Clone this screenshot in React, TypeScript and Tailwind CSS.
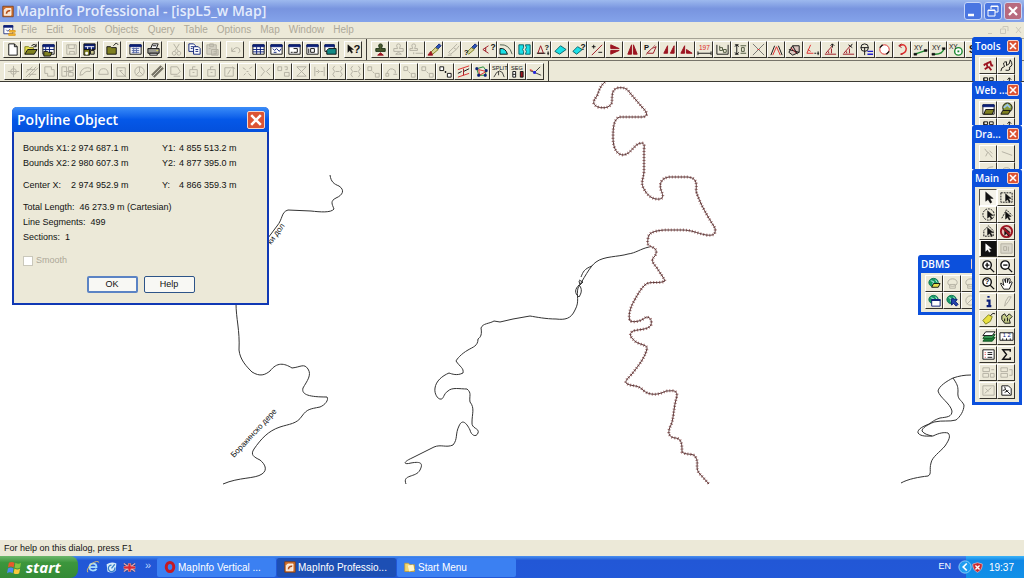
import React from "react";

type Path = [d: string, stroke: string, fill?: string, width?: number];
type Label = { t: string; x: number; y: number; c: string; s: number };
type Art = (Path | Label)[];

const K = "#111111";
const G = "#b3b0a2";
const R = "#9c1420";
const RED = "#dd2a2a";
const CY = "#19e0e6";
const N = "#0c2078";
const Y = "#e6df4c";
const OL = "#7f8020";
const GR = "#1c8a30";
const W = "#ffffff";

const txt = (t: string, x: number, y: number, c = K, s = 7): Label => ({ t, x, y, c, s });

const windowFrame: Art = [
  ["M2 3H14V13H2Z", K, W],
  ["M2 3H14V5H2Z", N, N],
];

const magnifier: Path = ["M11 6.5A4.5 4.5 0 1 1 2 6.5A4.5 4.5 0 1 1 11 6.5M10 10L14 14", K, W, 1.5];
const globe: Art = [
  ["M12 7A5 4.5 0 1 1 2 7A5 4.5 0 1 1 12 7", "#0e7455", "#169a64"],
  ["M4 5L7 6L6 9M9 4L11 7", "#bfeee8", "none"],
];
const brush: Art = [
  ["M13 2L9 6L11 8L15 4Z", N, "#2f58b8"],
  ["M9 6L4 11L6 13L12 8Z", OL, "#d9d39a"],
];
const cursor = (x: number, y: number, c = K): Path => [
  `M${x} ${y}V${y + 8}L${x + 2} ${y + 6}L${x + 4} ${y + 9}L${x + 5} ${y + 8}L${x + 3} ${y + 5}H${x + 6}Z`,
  c,
  c,
  0.5,
];

const icons: Record<string, Art> = {
  app: [["M1 1H15V15H1Z", "#7a3a12", "#d3722e"], ["M5 4H12V13H3V6Z", W, "#f6e2cf"], ["M6 11A4 4 0 0 1 11 7", "#b04a18", "none", 2]],
  doc: [["M1 2H12V12H1Z", N, W], ["M1 2H12V4H1Z", N, N], ["M4 7L6 9L9 6", N, "none"], ["M8 8H15V10H8ZM7 12H15V14H7Z", "#e09818", "#f4bc38"]],
  page: [["M4 2H10L13 5V14H4Z", K, W], ["M10 2V5H13", K, "none"]],
  open: [["M2 13V5H6L7 6H11V8", OL, Y], ["M2 13L5 8H15L12 13Z", K, OL], ["M9 4Q12 1 14 4M14 2V5H11", K, "none"]],
  openTable: [...windowFrame, ["M5 5V12M9 5V12M2 8H14", N, "none"], ["M3 14V10H7L8 11H12L10 15H3Z", K, OL]],
  save: [["M3 3H13V13H3ZM5 3V7H11V3M6 13V10H11V13", G, "none"]],
  saveTable: [["M2 2H14V8H2Z", K, N], ["M3 5H13M6 5V8M10 5V8", W, "none"], ["M2 8H8V14H2Z", K, OL], ["M4 11H6V13H4Z", W, W], ["M9 9H13V13H9Z", K, "#c9c48c"]],
  close: [["M2 13V5H6L7 6H12V13Z", K, OL], ["M9 4L12 1L14 3", K, "none"]],
  window: [...windowFrame, ["M4 7H12M4 9H12M4 11H12M6 6V12M9 6V12", "#566aa8", "none"]],
  print: [["M5 7L7 2H13L11 7", K, W], ["M2 7H14V12H2Z", K, "#9a9a92"], ["M4 12H12V14H4Z", K, W], ["M7 4H11", K, "none"], ["M11 9H13", Y, "none"]],
  cut: [["M5 2L10 10M11 2L6 10M5 14A2 2 0 1 1 6 10A2 2 0 1 1 5 14M11 14A2 2 0 1 1 10 10A2 2 0 1 1 11 14", G, "none"]],
  copy: [["M2 2H7L9 4V10H2Z", N, W], ["M7 5H12L14 7V13H7Z", N, W], ["M4 5H7M4 7H6M9 8H12M9 10H12", N, "none"]],
  paste: [["M2 3H12V13H2ZM5 2H9V5H5ZM7 8H14V14H7ZM9 10H12M9 12H12M4 7H6", G, "#d4d1c3"]],
  undo: [["M4 6V10H8M4 10Q8 4 12 7Q14 10 11 12", G, "none"]],
  browser: [...windowFrame, ["M2 8H14M2 10.500H14M6 5V13M10 5V13", N, "none"]],
  mapper: [...windowFrame, ["M4 7L6 9L8 7L11 10L13 7M5 11H8", N, "none"]],
  grapher: [...windowFrame, ["M7 7H11V11H7M4 11H6", K, "none"]],
  layout: [...windowFrame, ["M6 7H10V11H6Z", K, "none"], ["M4 7V12", K, "none"]],
  redistrict: [["M2 3H12V10H2Z", K, W], ["M2 3H12V5H2Z", N, N], ["M6 7H14V13H4V9Z", K, "#128a86"]],
  helpArrow: [cursor(2, 3), txt("?", 8, 12, K, 12)],
  stamp: [["M6 4A2 2 0 1 1 10 4L9 7H13V10H3V7H7Z", "#1f3318", "#4a5a30"], ["M5 14L8 11.500L11 14Z", R, R]],
  stampGrey: [["M6 4A2 2 0 0 1 10 4L9 7H13V10H3V7H7ZM5 13L8 11L11 13Z", G, "none"]],
  stampGrey2: [["M3 4A2 2 0 0 1 7 4L6 7H9V9H1V7H4ZM7 12H15M5 11V13", G, "none"]],
  brushRed: [...brush, ["M1 14L4 10L6 14Z", R, R]],
  brushGrey: [["M13 2L9 6L4 11L6 13L12 8L15 4M3 14H7M9 6L12 8", G, "none"]],
  brushAsk: [...brush, txt("?", 1, 14, K, 8)],
  lessAsk: [["M8 4L2 8L8 12M5 6V10", R, "none"], txt("?", 10, 8, K, 9)],
  arcCyan: [["M1 13V7Q7 6 9 13Z", K, CY], ["M1 3Q11 2 14 13", "#4c5c4c", "none"]],
  splitCyan: [["M2 3H7V6L6 8L7 10V13H2ZM9 3H14V13H9L10 10L9 8L10 6Z", "#0b6268", CY]],
  triAsk: [["M3 12L6 4L9 12Z", R, "none"], ["M2 12H11M13 12H15M14 10V14", K, "none"], txt("?", 10, 8, K, 8)],
  diamond: [["M2 10L8 4L14 8L7 13Z", "#0b6268", CY]],
  diamondAsk: [["M2 10L7 5L12 8L6 13Z", "#0b6268", CY], txt("?", 10, 8, K, 9)],
  plusLine: [["M3 14L14 3", R, "none"], ["M3 5H7M5 3V7M10 11H14", K, "none"]],
  flipV: [["M4 3L13 7H4ZM4 13L13 9H4Z", R, R]],
  flipH: [["M7 3V13H3ZM9 3V13H13Z", R, R]],
  pDiamond: [["M4 12L9 7L14 5L11 12Z", R, "none"], ["M3 14L13 3", "#b67676", "none"], txt("P", 1, 8, K, 8)],
  tri2: [["M3 12L7 4V12ZM10 12L14 4V12Z", R, R]],
  tri3: [["M2 12L6 4V12ZM8 12V8L14 12Z", R, R]],
  n197: [txt("197", 2, 9, RED, 7), ["M1 12H15M1 10V14M15 10V14", K, "none"]],
  bars: [["M2 3V13M14 3V13M2 13H14", K, "none"], ["M5 4V9H8V6H5M9 8H12V11H9Z", "#4c553c", "none"]],
  dims: [["M4 3V13M2 3H6M2 13H6M2 5L4 3L6 5M2 11L4 13L6 11", K, "none"], ["M8 4H14M8 12H14M9 6H12V10H9Z", "#4c553c", "none"]],
  cross: [["M2 2L14 14M14 2L2 14", "#555555", "none", 0.8], ["M7 8H9", RED, "none"]],
  lambda: [["M2 14L6 4M14 14L10 4", K, "none"], ["M4 14L8 5L12 14", RED, "none"]],
  poly: [["M2 11L6 4H13V11L6 14ZM2 8L13 11M6 4L11 13", K, "#d9c5bd"], ["M4 6L10 12", R, "none"]],
  angle1: [["M6 3L2 12H9M3 8L6 10", RED, "none"], ["M10 12H12M13 12H15M14 10V14", K, "none"]],
  angle2: [["M2 13H14M3 12L10 4M9 12V7M6 10V12", R, "none"], ["M10 6V2M8 4L10 2L12 4", K, "none"]],
  angle3: [["M2 13H14M3 12L10 4M9 12V7M6 10V12", R, "none"], ["M8 3L12 6M12 2L10 5", K, "none"]],
  circleEq: [["M10 6A4 4 0 1 1 2 6A4 4 0 1 1 10 6M2 6H10M6 6V14", K, "none"], ["M9 10H15M9 13H15", "#2020cc", "none", 1.5]],
  circle: [["M13 8A5 5 0 1 1 3 8A5 5 0 1 1 13 8", RED, W], ["M6 3L3 6M10 13L13 10", K, "none", 1.5]],
  arcArrow: [["M5 4Q11 1 12 7Q12 12 6 13", RED, "none", 1.5], ["M7 2L4 4L7 6M6 13H8", R, "none"]],
  xyLine: [["M2 13L14 9", GR, "none", 1.5], ["M1 12H4V14H1ZM12 8H15V10H12Z", K, K, 0.5], txt("XY", 1, 8, K, 7)],
  xyCurve: [["M2 13Q12 14 14 7", GR, "none", 1.5], ["M1 12H4V14H1ZM12 6H15V8H12Z", K, K, 0.5], txt("XY", 1, 8, K, 7)],
  xyCircle: [["M14 10A4 4 0 1 1 6 10A4 4 0 1 1 14 10", GR, W, 1.5], ["M9 10H11", GR, "none", 2], txt("XY", 0, 7, K, 7)],
  letterS: [txt("S", 2, 12, K, 11)],
  target: [["M8 2V14M2 8H14M11 8A3 3 0 1 1 5 8A3 3 0 1 1 11 8", G, "none"]],
  hatch: [["M2 14L13 3M5 14L15 4M2 9L9 3M3 6H12M5 11H13", G, "none"]],
  combine: [["M3 3H10V6H13V13H6V10H3Z", G, "none"]],
  boxes: [["M2 3H7V13H2ZM9 3H14V7H9ZM9 9H14V13H9ZM4 8H12", G, "none"]],
  blob: [["M2 12Q3 4 10 4Q16 4 13 8Q9 7 7 9Q6 12 2 12", G, "none"]],
  dome: [["M3 11Q3 5 8 5Q13 5 13 11Z", G, "none"]],
  selBox: [["M3 4H12V13H3ZM6 7L13 14M6 7H9", G, "none"]],
  pie: [["M13 8A5 5 0 1 1 3 8A5 5 0 1 1 13 8M8 8V3M8 8L4 12M8 8L12 12", G, "none"]],
  thick: [["M3 13L13 3", "#777466", "none", 5], ["M3 13L13 3", "#d6d3c6", "none", 1]],
  tag: [["M3 3H10L13 8L10 11H3ZM6 13H13", G, "none"]],
  boxUp: [["M4 6H12V13H4ZM7 6V3H10M7 9H9", G, "none"]],
  boxNote: [["M3 4H12V13H3ZM6 11L9 6M11 3L14 5", G, "none"]],
  scatter: [["M3 4L6 6M10 5L13 3M4 12L6 10M9 10L12 13M7 8H9", G, "none"]],
  arms: [["M3 3L7 8L3 13M13 4L9 8L13 12", G, "none"]],
  quest: [["M2 3H6V7H2ZM9 9H14V13H9ZM9 3H12V6H10", G, "none"]],
  hour: [["M3 3H13L3 13H13L3 3", G, "none"]],
  squeeze: [["M3 3V13M13 3V13M4 8H7M9 8H12M6 6L8 8L6 10", G, "none"]],
  zig: [["M5 2L3 5L5 8L3 11L5 14M11 2L13 5L11 8L13 11L11 14M6 8H10", G, "none"]],
  nodes: [["M2 3H6V7H2ZM10 10H14V14H10ZM7 8L9 10", G, "none"]],
  nodeCurve: [["M3 10Q6 2 12 7M2 10H5V13H2ZM10 11H14M12 7V10", G, "none"]],
  nodesK: [["M2 3H6V7H2ZM10 10H14V14H10Z", K, W], ["M7.500 8H8.500V9H7.500Z", K, K]],
  redLines: [["M2 6L14 2M2 14L14 10", RED, "none"], ["M2 10L6 8M8 8L14 5", K, "none"], ["M8 5V12", R, "none"]],
  polyNodes: [["M3 5L10 3L13 7L12 12H5Z", GR, "none"], ["M5 6L13 8L6 12Z", RED, "none"], ["M2 4H4V6H2ZM12 6H14V8H12ZM4 11H6V13H4ZM11 11H13V13H11Z", N, N]],
  split: [txt("SPLIT", 0, 6, K, 6), ["M2 14L5 9M5 9Q8 6 11 9L13 14M7 8V12", K, "none", 0.8]],
  seg: [txt("SEG", 1, 6, K, 6), ["M3 8H6V14H3ZM3 11H6", K, W], ["M11 8H14V14H11Z", K, R]],
  joint: [["M2 7L7 9L13 3M7 9L14 12", K, "none", 0.8], ["M6 8H8V10H6Z", "#2424dd", "#2424dd"], ["M2 6L5 7", RED, "none"]],
  run: [["M4 12L7 10L6 6L10 4L11 8H13M8 9L11 13M5 6L3 8", R, "none", 2]],
  wrench: [["M2 14Q2 10 6 9Q3 4 8 4L8 8Q12 7 12 2Q16 8 11 10Q13 14 7 13", K, "none"]],
  webMap: [...windowFrame, ["M3 13L5 8H14L12 13Z", K, OL]],
  webGlobe: [["M14 6A5 5 0 1 1 4 6A5 5 0 1 1 14 6", K, "#8a9b38"], ["M5 6L9 3L12 6", "#9cc6e8", "none", 2], ["M2 13L4 9H12L10 13Z", K, OL]],
  symGrey: [["M4 3L7 7L5 11M7 6L12 12M9 5L12 8", G, "none"]],
  lineGrey: [["M3 6L14 10", G, "none"]],
  arcGrey: [["M3 12Q5 4 13 4", G, "none"]],
  flags: [["M3 3H7V6H3ZM9 3H13V6H9ZM3 3V12", K, "none"]],
  pinK: [["M5 6V12M11 3V10M9 5L11 3L13 5", K, "none"]],
  select: [["M5 2V12L7.500 10L10 14L11.500 13L9.500 9H13Z", K, K, 0.5]],
  marquee: [["M2 3H14V13H2Z", K, "none"], cursor(7, 4)],
  radius: [["M14 8A6 6 0 1 1 2 8A6 6 0 1 1 14 8", K, "none"], cursor(7, 4)],
  polySel: [["M3 12L8 3L14 9", K, "none"], cursor(7, 5)],
  boundary: [["M3 13V7L8 2L13 7V13Z", K, "none"], cursor(7, 4)],
  unselect: [["M14 8A6 6 0 1 1 2 8A6 6 0 1 1 14 8", R, "#e4bcb4", 2], cursor(6, 4), ["M4 4L12 12", R, "none", 2]],
  invert: [["M0 0H16V16H0Z", K, K], cursor(5, 3, W)],
  graphSel: [["M2 3H14V13H2ZM5 6H8V10H5ZM10 6V11", G, "#dad7ca"]],
  zoomIn: [magnifier, ["M4.500 6.500H9M6.500 4V9", K, "none", 1.5]],
  zoomOut: [magnifier, ["M4.500 6.500H9", K, "none", 1.5]],
  zoomAsk: [magnifier, txt("?", 4, 9, K, 8)],
  hand: [["M5 14L2 9Q1 7 3 8L5 10L4 4Q5 2 6 4L7 7V3Q8 1 9 3V7L10 3Q12 2 12 4L11 8Q14 5 14 7L11 14Z", K, W]],
  info: [["M8 2V4M6 7H9V13M6 13H11", N, "none", 2.4]],
  bolt: [["M10 3H13L10 8L6 13L7 8Z", G, "none"]],
  label: [["M2 10L8 4L12 6L10 11L5 14Z", OL, "#e9e040"], ["M10 5Q13 1 15 3", K, "none"]],
  drag: [["M3 5L6 3L8 6L11 3L14 6L11 9L12 13H6L3 9Z", K, "#c9cf8b"], ["M6 8V11M9 7V11", K, "none"]],
  layers: [["M2 13L5 9H15L12 13Z", "#0f5220", "#1c7a34"], ["M2 10L5 6H15L12 10Z", "#0f5220", "#3ca05a"], ["M2 7L5 3H15L12 7Z", K, W]],
  ruler: [["M1 4H15V12H1Z", K, W], ["M4 10V12M8 10V12M12 10V12", K, "none"], txt("1 2", 4, 9, N, 6)],
  legend: [["M2 3H14V13H2Z", K, W], ["M4 6H5M4 8H5M4 11H5", RED, "none"], ["M7 6H12M7 8H12M7 11H12", K, "none"]],
  sigma: [["M12 5V3H4L8 8L4 13H12V11", K, "none", 1.5]],
  gear1: [["M2 3H9V7H2ZM2 9H8V13H2ZM10 9H14V13H10ZM11 5H14", G, "none"]],
  gear2: [["M2 3H9V7H2ZM2 9H9V13H2ZM11 5H14V11H11", G, "none"]],
  clip1: [["M2 3H14V13H2ZM4 11L11 5M5 6L8 9", G, "none"]],
  clip2: [["M3 3H10L13 6V13H3Z", K, W], ["M6 4L7 7L12 12M4 8L7 7M6 10L10 8", K, "none"]],
  dbOpen: [...globe, ["M5 12L7 8H14L12 12Z", K, Y]],
  dbGrey: [["M13 7A5 4 0 1 1 3 7A5 4 0 1 1 13 7M5 9H11V13H5Z", G, "none"]],
  dbWin: [...globe, ["M5 7H14V14H5Z", N, W], ["M5 7H14V8H5Z", N, N]],
  dbArrow: [...globe, ["M7 6V13L9 11L12 14L14 12L11 9L13 7Z", N, "#2644ae"]],
  ban: [["M13 8A5 5 0 1 1 3 8A5 5 0 1 1 13 8M4 12L12 4", G, "none"]],
};

const DASHED = new Set(["marquee", "radius", "polySel", "boundary"]);

function Icon({ name, className = "h-4 w-4" }: { name: string; className?: string }) {
  return (
    <svg viewBox="0 0 16 16" className={className} aria-hidden="true">
      {icons[name].map((p, i) =>
        Array.isArray(p) ? (
          <path
            key={i}
            d={p[0]}
            stroke={p[1]}
            fill={p[2] ?? "none"}
            strokeWidth={p[3] ?? 1}
            strokeDasharray={DASHED.has(name) && i === 0 ? "2 1" : undefined}
          />
        ) : (
          <text key={i} x={p.x} y={p.y} fill={p.c} fontSize={p.s} fontWeight={p.s > 7 ? "bold" : "normal"} fontFamily="Liberation Sans, sans-serif">
            {p.t}
          </text>
        )
      )}
    </svg>
  );
}

function ToolButton({ name, pressed = false }: { name: string; pressed?: boolean }) {
  return (
    <button
      type="button"
      aria-label={name}
      aria-pressed={pressed}
      className={
        "flex h-[17px] w-[18px] shrink-0 items-center justify-center overflow-hidden border " +
        (pressed
          ? "border-t-[#55534a] border-l-[#55534a] border-r-white border-b-white bg-[#f5f3ea]"
          : "border-t-white border-l-white border-r-[#35332c] border-b-[#35332c] bg-[#ece9d8]")
      }
    >
      <Icon name={name} className="h-[15px] w-[15px] shrink-0" />
    </button>
  );
}

function ToolGroup({ names }: { names: string[] }) {
  return (
    <div className="flex">
      {names.map((n, i) => (
        <ToolButton key={i} name={n} />
      ))}
    </div>
  );
}

const standardGroups = [
  ["page", "open", "openTable"],
  ["save", "saveTable"],
  ["close"],
  ["window", "print"],
  ["cut", "copy", "paste"],
  ["undo"],
  ["browser", "mapper", "grapher", "layout", "redistrict"],
  ["helpArrow"],
];

const cogoTools = [
  "stamp", "stampGrey", "stampGrey2", "brushRed", "brushGrey", "brushAsk", "lessAsk", "arcCyan", "splitCyan",
  "triAsk", "diamond", "diamondAsk", "plusLine", "flipV", "flipH", "pDiamond", "tri2", "tri3", "n197", "bars",
  "dims", "cross", "lambda", "poly", "angle1", "angle2", "angle3", "circleEq", "circle", "arcArrow", "xyLine",
  "xyCurve", "xyCircle", "letterS",
];

const objectTools = [
  "target", "hatch", "combine", "boxes", "blob", "dome", "selBox", "pie", "thick", "tag", "boxUp", "boxUp",
  "boxNote", "scatter", "arms", "quest", "hour", "squeeze", "zig", "zig", "nodes", "nodeCurve", "nodes", "nodes",
  "nodesK", "redLines", "polyNodes", "split", "seg", "joint",
];

const menus = ["File", "Edit", "Tools", "Objects", "Query", "Table", "Options", "Map", "Window", "Help"];

function CloseX({ className }: { className: string }) {
  return (
    <button
      type="button"
      aria-label="Close"
      className={"flex shrink-0 items-center justify-center rounded-[2px] border border-[#f3d5cc] bg-[#dc5434] " + className}
    >
      <svg viewBox="0 0 10 10" className="h-full w-full">
        <path d="M2 2L8 8M8 2L2 8" stroke="#fff" strokeWidth="1.600" />
      </svg>
    </button>
  );
}

function Palette({ title, groups, columns = "grid-cols-2", className }: { title: string; groups: string[][]; columns?: string; className: string }) {
  return (
    <section className={"flex flex-col overflow-hidden rounded-t-[3px] border-x-[3px] border-[#0c50dc] bg-[#0c50dc] " + className}>
      <header className="flex h-[18px] shrink-0 items-center justify-between">
        <h2 className="whitespace-nowrap font-['Open_Sans',sans-serif] text-[10px] leading-[18px] font-semibold text-white">{title}</h2>
        <CloseX className="h-3 w-3" />
      </header>
      <div className="flex flex-col items-start gap-px bg-[#ece9d8] px-1 pt-[2px] pb-[3px]">
        {groups.map((g, i) => (
          <div key={i} className={"grid " + columns}>
            {g.map((n, j) => (
              <ToolButton key={j} name={n} pressed={n === "select"} />
            ))}
          </div>
        ))}
      </div>
    </section>
  );
}

const mainGroups = [
  ["select", "marquee", "radius", "polySel", "boundary", "unselect", "invert", "graphSel"],
  ["zoomIn", "zoomOut", "zoomAsk", "hand"],
  ["info", "bolt", "label", "drag"],
  ["layers", "ruler"],
  ["legend", "sigma"],
  ["gear1", "gear2"],
  ["clip1", "clip2"],
];

const selectedRiver =
  "M605 82C600 86 599 91 597 96C592 102 593 105 598 107C605 109 611 107 612 102C612 95 612 90 617 88C623 87 627 88 630 93L642 107C648 113 648 116 643 117H620C614 118 613 127 613 137C613 149 617 155 624 155C631 153 633 147 638 144C643 142 645 143 644 149V172C643 180 641 182 643 187C647 196 653 200 660 199C664 198 663 195 661 190C659 184 661 178 669 177H688C696 178 697 182 696 191C700 204 708 217 715 228C716 234 714 236 706 235C696 233 692 230 682 230H664C653 231 648 233 648 239C647 244 648 246 652 247C657 249 657 252 655 256C650 260 653 263 657 268C660 273 664 278 665 281C659 284 651 281 646 284C641 288 638 294 634 301C630 308 628 316 630 321C636 323 643 320 646 317C651 317 652 321 651 325C648 330 640 329 633 331C628 334 631 338 636 342C641 345 648 345 647 349C644 360 637 367 632 374C628 378 625 381 626 383C631 387 637 384 643 390C649 396 659 395 666 391C672 391 677 389 677 396C673 408 674 421 670 427C667 434 670 438 676 438C682 439 682 445 682 452C687 456 694 452 696 458C699 463 695 467 699 473L709 484";

const rivers = [
  "M330 175C331 182 334 184 339 186C345 190 343 195 336 198C330 201 332 204 334 209C331 213 320 212 311 211L288 210C281 212 283 219 277 226L268 238",
  "M236 303C236 319 240 330 239 350C240 360 247 367 252 372C260 377 265 375 270 371C277 362 284 363 292 368C301 367 304 363 308 369C312 375 307 381 303 388C301 395 310 397 327 397C329 400 325 405 320 407C310 409 307 409 302 416C297 424 289 424 280 427C268 431 261 439 254 449C250 455 254 457 260 460C265 464 268 470 262 474C255 479 239 477 223 484",
  "M649 247C640 249 636 253 628 254C618 257 604 256 596 262C590 266 583 280 578 288C576 296 580 301 575 310C571 319 565 320 556 319C546 319 536 317 530 316L513 319L500 322L494 321C489 324 483 323 481 328C482 334 481 337 478 339C478 346 473 347 468 350C461 354 457 359 456 361C460 367 464 368 463 373C457 376 452 374 449 373C442 376 436 381 435 388C434 394 438 399 440 399C444 400 443 394 448 391C452 387 460 389 467 389C472 393 469 396 470 402C475 408 472 414 472 422C471 429 480 428 478 433C476 438 471 435 470 430C466 422 462 419 459 426C455 434 458 439 453 445C446 448 441 444 434 447L412 458C403 462 403 465 411 463C422 461 423 464 420 470C416 478 402 474 406 484",
  "M592 266C584 269 583 272 581 277M579 280L583 282L580 285L579 281M579 285C575 289 574 293 579 297C583 291 581 287 579 285",
  "M971 375C964 375 959 376 953 378C947 381 939 386 938 391C940 398 950 403 952 411C952 417 947 417 940 418C934 420 932 422 929 424C924 426 917 429 918 433C921 437 928 436 933 436C939 433 944 432 948 433C951 436 949 440 945 446C940 452 932 457 931 463C929 470 932 474 928 476C919 477 908 479 901 483",
  "M953 378C957 384 958 386 958 391C957 400 961 399 964 405C964 411 960 417 956 420C949 422 943 420 934 422C927 425 922 428 922 431C924 434 928 435 932 436",
];

function MapView() {
  return (
    <svg viewBox="0 82 1024 458" preserveAspectRatio="xMinYMin slice" className="absolute inset-0 h-full w-full" role="img" aria-label="River map">
      {rivers.map((d, i) => (
        <path key={i} d={d} fill="none" stroke="#333" strokeWidth="1" />
      ))}
      <path d={selectedRiver} fill="none" stroke="#a87878" strokeWidth="3" strokeDasharray="1 2" />
      <path d={selectedRiver} fill="none" stroke="#5c3a3a" strokeWidth="1" />
      <g fontFamily="Liberation Sans, sans-serif" fontSize="8" fill="#111">
        <text transform="translate(234 458) rotate(-47)">Боракинско дере</text>
        <text transform="translate(271 245) rotate(-54)">ки дол</text>
      </g>
    </svg>
  );
}

function Bounds({ label, value }: { label: string; value: string }) {
  return (
    <>
      <dt>{label}</dt>
      <dd>{value}</dd>
    </>
  );
}

function PolylineDialog() {
  return (
    <section role="dialog" aria-label="Polyline Object" className="absolute top-[25px] left-3 w-[257px] rounded-t-[5px] border-2 border-t-0 border-[#1038b4] bg-[#ece9d8]">
      <header className="-mx-[2px] flex h-[25px] items-center justify-between rounded-t-[5px] bg-linear-to-b from-[#3a8cf8] via-[#0558e8] to-[#0450dc] pr-1 pl-[5px]">
        <h1 className="font-['Open_Sans',sans-serif] text-[14px] font-semibold text-white">Polyline Object</h1>
        <CloseX className="h-[18px] w-[18px]" />
      </header>
      <div className="flex flex-col px-[9px] pt-[9px] pb-[10px] font-['Liberation_Sans',sans-serif] text-[9px] leading-[15px] whitespace-nowrap text-[#111]">
        <dl className="grid grid-cols-[48px_91px_17px_1fr]">
          <Bounds label="Bounds X1:" value="2 974 687.1 m" />
          <Bounds label="Y1:" value="4 855 513.2 m" />
          <Bounds label="Bounds X2:" value="2 980 607.3 m" />
          <Bounds label="Y2:" value="4 877 395.0 m" />
        </dl>
        <dl className="mt-[7px] grid grid-cols-[48px_91px_17px_1fr]">
          <Bounds label="Center X:" value="2 974 952.9 m" />
          <Bounds label="Y:" value="4 866 359.3 m" />
        </dl>
        <p className="mt-[7px]">Total Length:&nbsp; 46 273.9 m (Cartesian)</p>
        <p>Line Segments:&nbsp; 499</p>
        <p>Sections:&nbsp; 1</p>
        <label className="mt-2 flex items-center gap-[3px] text-[#aca899]">
          <input type="checkbox" disabled className="h-[10px] w-[10px] appearance-none border border-[#cac8bb] bg-white" />
          Smooth
        </label>
        <div className="mt-2 flex justify-center gap-[6px]">
          <button type="button" className="h-[17px] w-[51px] rounded-[2px] border-2 border-[#5b83c4] bg-[#f8f8f4] leading-[13px]">OK</button>
          <button type="button" className="h-[17px] w-[51px] rounded-[2px] border border-[#2d5488] bg-[#f8f8f4] leading-[15px]">Help</button>
        </div>
      </div>
    </section>
  );
}

function TitleBar() {
  const btn = "flex h-[18px] w-[18px] items-center justify-center rounded-[3px] border border-[#c7d6f7]";
  return (
    <header className="flex h-[22px] items-center bg-linear-to-b from-[#9db9ee] via-[#7894df] via-40% to-[#84a3ea] pr-[2px] pl-[2px]">
      <Icon name="app" className="h-[13px] w-3" />
      <h1 className="ml-[2px] flex-1 font-['Open_Sans',sans-serif] text-[14px] leading-[22px] font-semibold text-[#e4ecfc]">MapInfo Professional - [ispL5_w Map]</h1>
      <div className="flex gap-[2px]">
        <button type="button" aria-label="Minimize" className={btn + " bg-[#4a76e2]"}>
          <svg viewBox="0 0 16 16" className="h-4 w-4"><path d="M3 12H9" stroke="#fff" strokeWidth="2.500" /></svg>
        </button>
        <button type="button" aria-label="Restore" className={btn + " bg-[#4a76e2]"}>
          <svg viewBox="0 0 16 16" className="h-4 w-4" fill="none" stroke="#fff"><path d="M6 6V3H13V9H10M3 7H10V13H3ZM6 3.500H13M3 7.500H10" /></svg>
        </button>
        <button type="button" aria-label="Close" className={btn + " bg-[#b86a7e]"}>
          <svg viewBox="0 0 16 16" className="h-4 w-4"><path d="M4 4L12 12M12 4L4 12" stroke="#fff" strokeWidth="2.200" /></svg>
        </button>
      </div>
    </header>
  );
}

function Task({ label, active = false, children }: { label: string; active?: boolean; children: React.ReactNode }) {
  return (
    <button
      type="button"
      className={
        "flex h-[19px] w-[119px] items-center gap-[2px] rounded-[2px] pl-[7px] text-[10px] text-white " +
        (active ? "bg-[#1d4fb4]" : "bg-[#3b80f2]")
      }
    >
      {children}
      <span className="whitespace-nowrap">{label}</span>
    </button>
  );
}

function Taskbar() {
  return (
    <footer className="flex h-[22px] items-center bg-linear-to-b from-[#4a90f0] via-[#2257d6] via-20% to-[#2258d8] font-['Liberation_Sans',sans-serif]">
      <button type="button" className="flex h-[22px] w-[78px] items-center gap-1 rounded-r-[8px] bg-linear-to-b from-[#6cb86c] via-[#3c963c] via-30% to-[#348a36] pl-[7px]">
        <svg viewBox="0 0 16 16" className="h-[15px] w-[15px]">
          <path d="M2 3Q5 1 8 3L7 8Q4 6 1 8Z" fill="#e8582c" />
          <path d="M9 3Q12 5 15 3L14 8Q11 10 8 8Z" fill="#86c440" />
          <path d="M1 9Q4 7 7 9L6 14Q3 12 0 14Z" fill="#4a8cf0" />
          <path d="M8 9Q11 11 14 9L13 14Q10 16 7 14Z" fill="#f8c83c" />
        </svg>
        <span className="font-['Open_Sans',sans-serif] text-[15px] leading-[20px] font-bold text-white italic">start</span>
      </button>
      <div className="ml-2 flex w-[71px] items-center gap-[5px]">
        <svg viewBox="0 0 16 16" className="h-[14px] w-[14px]" fill="none">
          <path d="M4 8H12Q12 4 8 4Q4 4 4 8Q4 12 8 12Q11 12 12 10" stroke="#a6dcfc" strokeWidth="2" />
          <path d="M2 14Q0 10 7 4Q13 0 15 3" stroke="#f0c860" />
        </svg>
        <svg viewBox="0 0 16 16" className="h-[13px] w-[13px]">
          <path d="M2 4Q8 0 14 3L13 12Q8 16 3 13Z" fill="#d6ebfa" />
          <path d="M12 8A4 4 0 1 1 8 5M8 9L12 4" fill="none" stroke="#3880c8" strokeWidth="1.500" />
        </svg>
        <svg viewBox="0 0 16 16" className="h-[13px] w-[13px]">
          <path d="M1 3H15V13H1Z" fill="#23408c" /><path d="M1 3L15 13M15 3L1 13" stroke="#e8a8b0" strokeWidth="1.500" />
          <path d="M8 3V13M1 8H15" stroke="#fff" strokeWidth="4" /><path d="M8 3V13M1 8H15" stroke="#d82a34" strokeWidth="3" />
        </svg>
        <span className="mb-1 ml-1 text-[11px] leading-[10px] text-[#bcd4fc]">»</span>
      </div>
      <nav className="flex flex-1 gap-px">
        <Task label="MapInfo Vertical ...">
          <svg viewBox="0 0 16 16" className="h-3 w-3"><ellipse cx="8" cy="8" rx="5" ry="6" fill="none" stroke="#c41a24" strokeWidth="4" /></svg>
        </Task>
        <Task label="MapInfo Professio..." active>
          <Icon name="app" className="h-3 w-3" />
        </Task>
        <Task label="Start Menu">
          <svg viewBox="0 0 16 16" className="h-3 w-3"><path d="M1 3H6L8 5H14V14H1Z" fill="#f4d870" stroke="#c09830" /><path d="M5 6L12 5L14 12L7 14Z" fill="#fff6cc" /></svg>
        </Task>
      </nav>
      <span className="mr-[15px] text-[9px] text-white">EN</span>
      <div className="flex h-[22px] items-center bg-linear-to-b from-[#3cb4f8] via-[#1088e6] via-20% to-[#1290e8] pr-[10px] text-[10px] text-white">
        <svg viewBox="0 0 16 16" className="-ml-[8px] h-[14px] w-[14px]"><circle cx="8" cy="8" r="7" fill="#1f9cf0" stroke="#8fd4fc" /><path d="M10 4L6 8L10 12" fill="none" stroke="#fff" strokeWidth="2" /></svg>
        <svg viewBox="0 0 16 16" className="mr-[6px] h-[11px] w-[11px]"><path d="M8 1L15 3Q15 12 8 15Q1 12 1 3Z" fill="#cc2a30" stroke="#f0c0c0" /><path d="M5 5L11 11M11 5L5 11" stroke="#fff" strokeWidth="2" /></svg>
        <time>19:37</time>
      </div>
    </footer>
  );
}

export default function App() {
  return (
    <main className="relative flex h-screen flex-col overflow-hidden bg-[#ece9d8]">
      <TitleBar />
      <nav className="flex h-4 items-center pl-[3px] font-['Liberation_Sans',sans-serif] text-[10px] leading-[16px] text-[#aca899]">
        <Icon name="doc" className="h-[13px] w-[13px]" />
        <div className="ml-[5px] flex flex-1 gap-[9px]">
          {menus.map((m) => (
            <button key={m} type="button">{m}</button>
          ))}
        </div>
        <svg viewBox="0 0 36 10" className="mr-[2px] h-[10px] w-9" fill="none" stroke="#cac7ba">
          <path d="M2 8.500H6M17 3V1.500H22V6M14.500 4H19.500V8.500H14.500ZM30 2L35 8M35 2L30 8" />
        </svg>
      </nav>
      <div className="flex h-[22px] items-center overflow-hidden border-t border-[#a5a295] pl-[3px]">
        <div className="flex gap-[5px]">
          {standardGroups.map((g, i) => (
            <ToolGroup key={i} names={g} />
          ))}
        </div>
        <div className="mr-1 ml-1 h-[22px] w-px shrink-0 bg-[#3c3a33]" />
        <ToolGroup names={cogoTools} />
      </div>
      <div className="flex h-[22px] items-center border-t border-b border-t-[#77746a] border-b-[#3c3a33] pl-1">
        <ToolGroup names={objectTools} />
        <div className="ml-1 h-[20px] w-px bg-[#3c3a33]" />
      </div>
      <div className="relative flex-1 overflow-hidden bg-white">
        <MapView />
        <PolylineDialog />
      </div>
      <p className="h-4 pl-1 font-['Liberation_Sans',sans-serif] text-[9px] leading-[16px] text-[#111]">For help on this dialog, press F1</p>
      <Taskbar />

      <Palette
        title="DBMS"
        columns="grid-cols-3"
        groups={[["dbOpen", "dbGrey", "dbGrey", "dbWin", "dbArrow", "ban"]]}
        className="absolute top-[255px] right-[38px] w-[68px] border-b-[3px]"
      />
      <div className="absolute top-[37px] right-[2px] flex w-[50px] flex-col">
        <Palette title="Tools" groups={[["run", "wrench", "flags", "pinK"]]} className="h-11" />
        <Palette title="Web ..." groups={[["webMap", "webGlobe", "flags", "pinK"]]} className="h-11" />
        <Palette title="Dra..." groups={[["symGrey", "lineGrey", "arcGrey", "dome"]]} className="h-11" />
        <Palette title="Main" groups={mainGroups} className="border-b-[3px]" />
      </div>
    </main>
  );
}
